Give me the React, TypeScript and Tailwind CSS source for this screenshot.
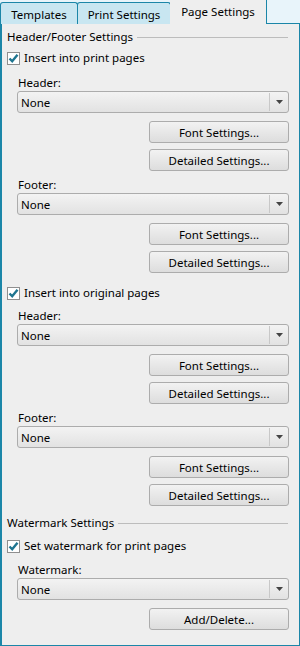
import { FC } from "react";

const Check: FC<{ label: string }> = ({ label }) => (
  <div className="flex h-[14px] items-center gap-[4px]">
    <div className="flex h-[13px] w-[13px] shrink-0 items-center justify-center border border-[#8f8f8f] bg-white">
      <svg width="11" height="11" viewBox="0 0 11 11">
        <path d="M1.5 5.5 L4.2 8.3 L9.5 1.8" fill="none" stroke="#1f7590" strokeWidth="2.4" />
      </svg>
    </div>
    <span className="leading-[14px]">{label}</span>
  </div>
);

const Select: FC = () => (
  <div className="flex h-[22px] items-stretch rounded-[3px] border border-[#acacac] bg-gradient-to-b from-[#f3f3f3] to-[#e2e2e2]">
    <div className="flex flex-1 items-center pl-[3px]">None</div>
    <div className="my-[1px] w-px bg-[#c8c8c8]" />
    <div className="flex w-[18px] items-center justify-center">
      <svg width="7" height="4" viewBox="0 0 7 4">
        <path d="M0 0 H7 L3.5 4 Z" fill="#444" />
      </svg>
    </div>
  </div>
);

const Button: FC<{ label: string }> = ({ label }) => (
  <div className="ml-auto flex h-[22px] w-[140px] items-center justify-center rounded-[3px] border border-[#acacac] bg-gradient-to-b from-[#f2f2f2] to-[#dddddd]">
    {label}
  </div>
);

const GroupTitle: FC<{ label: string }> = ({ label }) => (
  <div className="flex h-[16px] items-center gap-[4px]">
    <span className="leading-[16px]">{label}</span>
    <div className="mt-[1px] h-px flex-1 bg-[#bcbcbc]" />
  </div>
);

const Block: FC<{ label: string; buttons: string[] }> = ({ label, buttons }) => (
  <div className="flex flex-col pl-[10px]">
    <div className="h-[15px] pl-[1px] leading-[15px]">{label}</div>
    <div className="mt-[1px]">
      <Select />
    </div>
    <div className="mt-[8px] flex flex-col gap-[6px]">
      {buttons.map((b) => (
        <Button key={b} label={b} />
      ))}
    </div>
  </div>
);

const Tab: FC<{ label: string; width: string }> = ({ label, width }) => (
  <div
    className={`${width} mt-[2px] flex h-[22px] items-center justify-center rounded-t-[3px] border border-b-0 border-[#1b86a8] bg-[#c8e6f1] pt-[1px]`}
  >
    {label}
  </div>
);

const App: FC = () => {
  return (
    <div
      className="flex h-[646px] w-[300px] flex-col overflow-hidden bg-[#e8f4fa] text-[11.5px] leading-[15px] text-black"
      style={{ fontFamily: '"Segoe UI", "Noto Sans", sans-serif' }}
    >
      <div className="flex h-[24px] shrink-0 items-end">
        <Tab label="Templates" width="w-[78px]" />
        <div className="-ml-px">
          <Tab label="Print Settings" width="w-[94px]" />
        </div>
        <div className="-ml-px flex h-[24px] w-[97px] items-center justify-center border-r border-[#1b86a8] bg-[#eeeeee] pb-[1px]">
          Page Settings
        </div>
        <div className="h-[24px] flex-1 border-b border-[#1b86a8]" />
      </div>
      <div className="flex flex-1 flex-col border-b border-l-[2px] border-r border-[#1b86a8] bg-[#eeeeee] pl-[5px] pr-[6px] pt-[5px]">
        <div className="pr-[5px]">
          <GroupTitle label="Header/Footer Settings" />
        </div>
        <div className="mt-[6px]">
          <Check label="Insert into print pages" />
        </div>
        <div className="mt-[10px] pr-[4px]">
          <Block label="Header:" buttons={["Font Settings...", "Detailed Settings..."]} />
        </div>
        <div className="mt-[6px] pr-[4px]">
          <Block label="Footer:" buttons={["Font Settings...", "Detailed Settings..."]} />
        </div>
        <div className="mt-[13px]">
          <Check label="Insert into original pages" />
        </div>
        <div className="mt-[8px] pr-[4px]">
          <Block label="Header:" buttons={["Font Settings...", "Detailed Settings..."]} />
        </div>
        <div className="mt-[6px] pr-[4px]">
          <Block label="Footer:" buttons={["Font Settings...", "Detailed Settings..."]} />
        </div>
        <div className="mt-[9px] pr-[5px]">
          <GroupTitle label="Watermark Settings" />
        </div>
        <div className="mt-[8px]">
          <Check label="Set watermark for print pages" />
        </div>
        <div className="mt-[9px] pr-[4px]">
          <Block label="Watermark:" buttons={["Add/Delete..."]} />
        </div>
      </div>
    </div>
  );
};

export default App;
